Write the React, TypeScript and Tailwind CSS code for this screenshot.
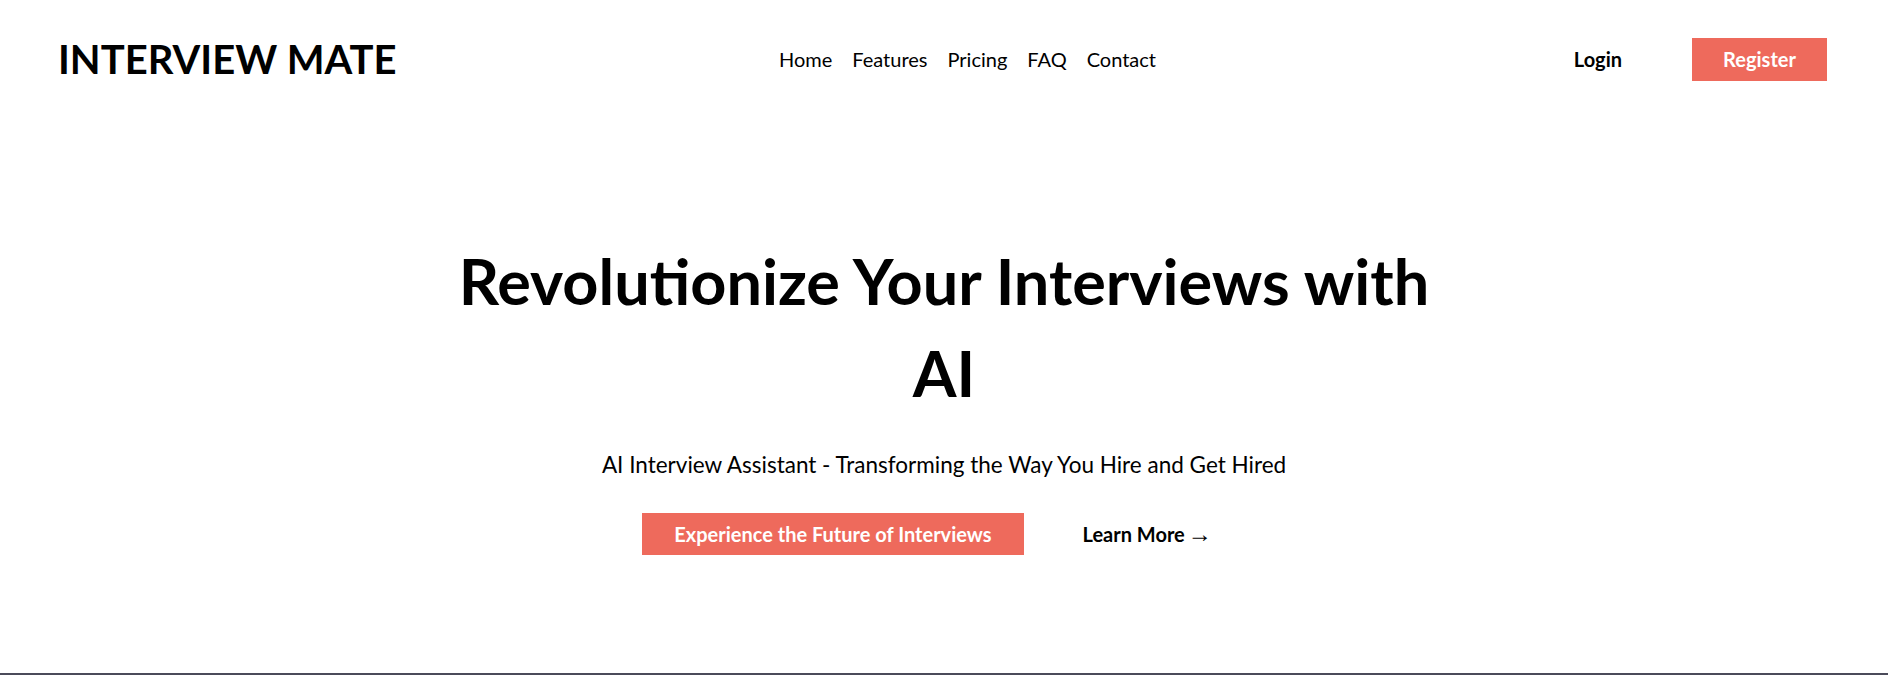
import React from 'react';

const navLinks = ['Home', 'Features', 'Pricing', 'FAQ', 'Contact'];

const Header: React.FC = () => (
    <header className="flex items-center justify-between h-[118px] pl-[58px] pr-[61px]">
        <div className="w-[500px]">
            <a href="#" className="text-[40px] font-bold text-black">INTERVIEW MATE</a>
        </div>
        <nav className="ml-[50px] flex items-center gap-[20px] text-[20px] text-black">
            {navLinks.map(link => (
                <a key={link} href="#">{link}</a>
            ))}
        </nav>
        <div className="w-[500px] flex items-center justify-end gap-[70px]">
            <a href="#" className="text-[20px] font-bold text-black">Login</a>
            <a href="#" className="h-[43px] w-[135px] flex items-center justify-center bg-[#ee6a5c] text-white text-[20px] font-bold">Register</a>
        </div>
    </header>
);

const Hero: React.FC = () => (
    <section className="flex flex-col items-center text-center pt-[117px] pb-[118px] border-b-2 border-[#4b4b5a]">
        <h1 className="max-w-[1020px] text-[63px] font-bold leading-[92px] text-black">
            Revolutionize Your Interviews with AI
        </h1>
        <p className="mt-[29px] text-[22.5px] leading-[34px] text-black">
            AI Interview Assistant - Transforming the Way You Hire and Get Hired
        </p>
        <div className="mt-[31px] mr-[34px] flex items-center gap-[59px]">
            <a href="#" className="h-[42px] px-[32px] flex items-center bg-[#ee6a5c] text-white text-[20px] font-bold">
                Experience the Future of Interviews
            </a>
            <a href="#" className="flex items-center gap-[3px] text-[20px] font-bold text-black">
                Learn More<span className="font-['Liberation_Serif',serif] font-normal text-[24px] leading-none">→</span>
            </a>
        </div>
    </section>
);

export default function App() {
    return (
        <div className="min-h-screen bg-white font-['Lato',sans-serif]">
            <Header />
            <Hero />
        </div>
    );
}
